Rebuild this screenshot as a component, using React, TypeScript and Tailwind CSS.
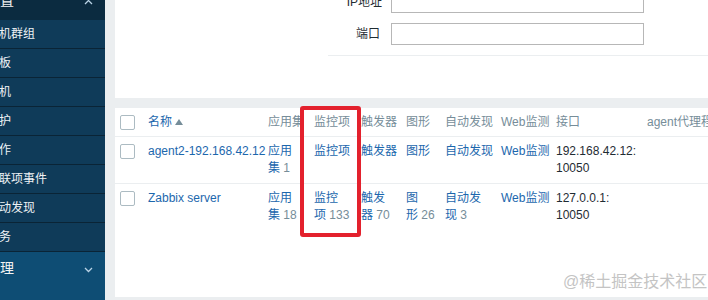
import { ReactNode } from 'react'

const font = { fontFamily: '"Liberation Sans", "Noto Sans CJK SC", sans-serif' }

const navItems = ['主机群组', '模板', '主机', '维护', '动作', '关联项事件', '自动发现', '服务']

function Chevron({ up }: { up?: boolean }) {
  return (
    <svg width="9" height="6" viewBox="0 0 9 6" className="shrink-0">
      <polyline
        points={up ? '1,5 4.5,1.5 8,5' : '1,1 4.5,4.5 8,1'}
        fill="none"
        stroke="#b9d3e6"
        strokeWidth="1.3"
      />
    </svg>
  )
}

function Checkbox() {
  return <div className="w-[15px] h-[15px] border border-[#acbbc2] rounded-[2px] bg-white" />
}

function Link({ children }: { children: ReactNode }) {
  return <span className="text-[#1c67ad]">{children}</span>
}

function Count({ n }: { n: string }) {
  return <span className="text-[#768d99]"> {n}</span>
}

const cols = ['w-[33px]', 'w-[120px]', 'w-[46px]', 'w-[47px]', 'w-[45px]', 'w-[39px]', 'w-[56px]', 'w-[55px]', 'w-[91px]', 'flex-1']

function Row({ cells }: { cells: ReactNode[] }) {
  return (
    <div className="flex pt-[6px] pb-[6px] leading-[17px] text-[12px]">
      {cells.map((c, i) => (
        <div key={i} className={`${cols[i]} shrink-0 whitespace-nowrap ${i === 0 ? 'pl-[5px] pt-[1px]' : ''}`}>
          {c}
        </div>
      ))}
    </div>
  )
}

export default function App() {
  return (
    <div className="relative w-[708px] h-[300px] flex overflow-hidden bg-[#ebeef0]" style={font}>
      {/* sidebar */}
      <div className="w-[105px] shrink-0 flex flex-col bg-[#0f3b59] overflow-hidden">
        <div className="h-[20px] shrink-0 bg-[#0b2b40] flex items-start justify-between pr-[12px]">
          <span className="-ml-[14px] -mt-[9px] text-[14px] leading-[18px] text-[#f2f2f2]">配置</span>
          <div className="-mt-[1px]">
            <Chevron up />
          </div>
        </div>
        {navItems.map((t) => (
          <div key={t} className="h-[29px] shrink-0 flex items-center border-b border-[#0a2436] text-[12px] text-[#eef2f5]">
            <span className="-ml-[13px]">{t}</span>
          </div>
        ))}
        <div className="flex-1 bg-[#0e4d74]">
          <div className="h-[32px] flex items-center justify-between pr-[12px] text-[14px] text-[#f2f2f2]">
            <span className="-ml-[14px]">管理</span>
            <div className="mt-[4px]">
              <Chevron />
            </div>
          </div>
        </div>
      </div>

      {/* content */}
      <div className="flex-1 flex flex-col pl-[10px]">
        <div className="h-[98px] shrink-0 bg-white flex flex-col text-[12px] text-[#1f2c33]">
          <div className="-mt-[9px] flex items-center h-[22px]">
            <div className="w-[267px] text-right">IP地址</div>
            <div className="ml-[9px] w-[253px] h-[22px] border border-[#b7b7b7]" />
          </div>
          <div className="mt-[10px] flex items-center h-[22px]">
            <div className="w-[265px] text-right">端口</div>
            <div className="ml-[11px] w-[253px] h-[22px] border border-[#b7b7b7]" />
          </div>
          <div className="mt-[10px] ml-[213px] h-px bg-[#ebeef0]" />
        </div>

        <div className="relative mt-[10px] h-[189px] shrink-0 bg-white">
          {/* header */}
          <div className="flex h-[29px] items-center border-b border-[#ebeef0] text-[12px] text-[#768d99] whitespace-nowrap">
            <div className={`${cols[0]} pl-[5px]`}>
              <Checkbox />
            </div>
            <div className={`${cols[1]} flex items-center gap-[3px] text-[#1c67ad]`}>
              名称
              <svg width="8" height="6" viewBox="0 0 8 6">
                <polygon points="4,0 8,6 0,6" fill="#768d99" />
              </svg>
            </div>
            <div className={cols[2]}>应用集</div>
            <div className={cols[3]}>监控项</div>
            <div className={cols[4]}>触发器</div>
            <div className={cols[5]}>图形</div>
            <div className={cols[6]}>自动发现</div>
            <div className={cols[7]}>Web监测</div>
            <div className={cols[8]}>接口</div>
            <div className="flex-1">agent代理程序</div>
          </div>

          <div className="border-b border-[#ebeef0]">
            <Row
              cells={[
                <Checkbox />,
                <Link>agent2-192.168.42.12</Link>,
                <>
                  <Link>应用</Link>
                  <br />
                  <Link>集</Link>
                  <Count n="1" />
                </>,
                <Link>监控项</Link>,
                <Link>触发器</Link>,
                <Link>图形</Link>,
                <Link>自动发现</Link>,
                <Link>Web监测</Link>,
                <span className="text-[#1f2c33]">
                  192.168.42.12:
                  <br />
                  10050
                </span>,
                null,
              ]}
            />
          </div>
          <Row
            cells={[
              <Checkbox />,
              <Link>Zabbix server</Link>,
              <>
                <Link>应用</Link>
                <br />
                <Link>集</Link>
                <Count n="18" />
              </>,
              <>
                <Link>监控</Link>
                <br />
                <Link>项</Link>
                <Count n="133" />
              </>,
              <>
                <Link>触发</Link>
                <br />
                <Link>器</Link>
                <Count n="70" />
              </>,
              <>
                <Link>图</Link>
                <br />
                <Link>形</Link>
                <Count n="26" />
              </>,
              <>
                <Link>自动发</Link>
                <br />
                <Link>现</Link>
                <Count n="3" />
              </>,
              <Link>Web监测</Link>,
              <span className="text-[#1f2c33]">
                127.0.0.1:
                <br />
                10050
              </span>,
              null,
            ]}
          />

          {/* highlight box */}
          <div className="absolute left-[185px] top-[-2px] w-[61px] h-[131px] border-[4px] border-[#e3212d] rounded-[3px]" />
        </div>
      </div>

      {/* watermark */}
      <div className="absolute left-[563px] top-[270px] text-[16px] text-[#c4c4c4] whitespace-nowrap">@稀土掘金技术社区</div>
    </div>
  )
}
